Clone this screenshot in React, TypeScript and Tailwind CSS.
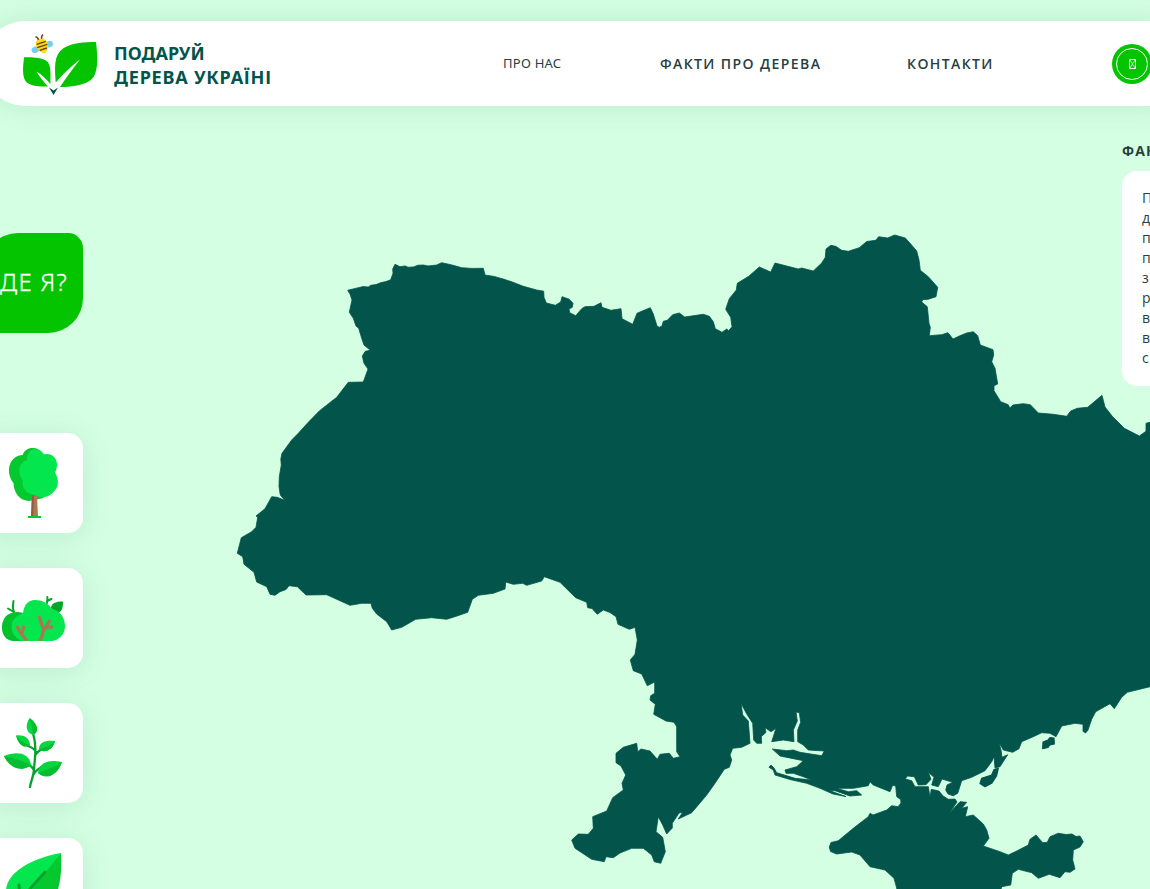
import React from "react";

const MAINLAND =
  "M347.7 290.3 358.3 287.7 363 286.6 368.3 287 370.7 285.3 376 284.6 380.7 282.7 386 281.6 390.7 279.7 393 273.3 392.7 269 395 264.3 400 266.7 405 265.9 408 267.2 413.3 267 418 265.2 423.3 265 428 266 436.7 265 441.7 262.7 452 265 461.7 267.7 472 268.4 483.3 268.3 485 275 494 276.4 503.3 279 513 282.3 523.3 286.3 536.7 290 543.7 291.2 544 297.3 546.3 303 555.3 305.3 560.7 302 562 296.7 569.3 299.3 573 303.3 572.3 307.3 569 309 569.7 312.7 575.7 315.7 581.7 308.7 585 306.7 594 306.3 601 302.7 602 307.3 611 310.3 621 308.7 622 318.7 632.7 324.3 637 313.3 644 310.3 650.3 307.7 653.3 314 657 326 659.3 327.3 662 326 663.3 321.3 667.3 320.3 672.7 314.7 679.3 313 684.7 317 703.3 314.3 709.3 316.3 713.3 321.7 715.3 328.7 722 332.3 726.7 329 728.7 330.7 732 326.7 730.7 317.3 725.7 309.3 729.3 298.7 736.3 290 737.3 283.3 748.7 276.3 759.3 267 770.7 272 775 263 798.3 269 801.7 268 813.3 271 821.7 263 825.3 257.3 826 249 830.7 245.3 835.7 246.3 841.7 250.3 848.3 251.3 859.3 247.7 866.7 241.5 875.7 240.3 878.7 236.7 887.7 238 894.7 235 905.3 238 910.7 244 916.7 251 919 260 920.3 270.3 928.3 276.7 937.7 287.3 936 296.7 928.3 299.3 922.7 299.7 921.7 302 927.3 306.7 929 323.3 930.3 327.3 929.3 335.7 941.7 334.7 948 332.7 953 339 959.3 336 966.7 333 973.3 331.7 977.7 335.7 980.3 345 993 349.7 993.7 355 991.7 361.7 995 368.3 997.7 384 994 385.7 994 390.7 1000.7 401.7 1008.3 404.7 1009.7 408 1013 405 1023.3 403.7 1030.3 404.7 1038.3 413 1053.3 414.3 1066.7 416.3 1070.7 411 1077.3 408.3 1087.7 407.3 1102 395.3 1105 407 1112.3 416.3 1124.3 428.3 1139.3 436 1146 431.3 1146 423.3 1160 420 1160 685 1150 686.7 1127.3 692.3 1121.7 697.3 1114.3 708.7 1110 703.7 1095.7 711.7 1091.7 719.3 1088 730 1085.7 733 1083 731.3 1083 724.3 1075 723.3 1061.7 726 1056 736.7 1050 733.3 1041.7 732.7 1033.3 736.7 1021.7 741.7 1019 748.7 1012.7 752.3 1003.3 750 999 742.7 1001 750 1002 757.3 1007.7 754.7 1000 766.7 995 768 994 756.7 991.7 761.7 985 770.7 971.7 777.3 961.7 780.7 957.7 793.3 953.3 795.8 948 794 945.7 790 947 785 952.7 782.3 942 779 938.3 786.7 931.7 785 934 777.3 928.3 772.3 931 779.3 926 784.7 918.3 785 914.3 776.7 907.3 776 905.3 779 911.7 780.7 915 786.7 928.3 786.7 930 797.3 931.3 789.3 939 791 943 796 948.3 799.3 955 799 957 802 949.3 813.3 960 801.7 966.700 802.3 961.7 808.3 967.7 806.7 965.3 816.7 973.3 815 983.3 824 986.7 830 989 838.3 983.3 846 1000 851.7 1008.3 855 1016.7 851 1028.3 845 1030 839.3 1036 835 1042.7 842.7 1047.3 842.3 1050 836.7 1058.3 833.3 1066 834.5 1072 834 1076 836.5 1080 836 1083.3 841.7 1080 847 1073.3 850 1072.7 860 1075 869 1070 872.3 1065 871.7 1060 877.7 1049.3 874.3 1038.3 878.3 1031.7 872.7 1018.3 869.3 1012.3 873.3 1010.7 885 1001.7 886.7 998 900 898 900 896.7 888 894 878.3 885 870 870 866.7 860 855 851.7 852 836.7 854 830.5 851.5 829.3 847 831 842.5 838.3 840.7 853.3 828.3 868.3 816.7 870 813.3 873 815 886.7 810 891.7 805.7 898 806.7 901 803 900.7 799.5 896.7 796.7 895.7 786 892.7 785.3 890 791.7 873.3 785 870 781.7 868.3 785.7 853.3 788.3 836.7 788.3 848.3 791.7 856.7 790.7 861.7 795 850 796 835 790.7 830 790.8 846 796.6 833 794 820 788.3 806.7 783.3 790 779.5 775 775 773.3 770 769 767.3 771 765 774 768 776.7 772.7 795 778.3 811.7 780 803.3 776.7 793.3 773.3 786 773.3 785 770 796.7 766.7 803.3 760.7 780 756 772.3 749 786.7 750.7 793.3 750 800 752.3 821.7 755.7 824.3 751 808.3 750 803.3 745 797.7 741.7 797.7 730 800.7 722.3 799.3 712.7 796 712 797.3 721 793.3 730 794 741.7 783.3 740 771.7 741.7 776 728.3 771 731.7 765 727.7 766 732.3 761.3 736.7 761.7 743.3 756.7 743.3 753.7 740 752.7 723.3 746.7 714 741 703.3 742.7 715 748.3 721 750 743.3 741.7 747.3 732.7 748.3 730 755 731.7 760 729.3 767.3 724.3 769.3 715 783.3 706.7 795 691.7 812.7 678.3 819 682.7 812.3 679 813 672.3 823.3 672.3 828 666.7 834 662.7 825 658.3 816.7 656 831.7 662.7 837.3 665.3 851.7 660.7 863.3 654.3 861.7 651.7 855 643.3 848.3 631.7 848.3 620 853 613.3 857.7 606 856.7 604.3 861.7 591.7 859.3 575 848.3 571.7 840 578.3 834 588.3 834.3 593.3 828.3 592.7 816.7 606.7 811 612.7 797.7 623.3 790 622 783.3 625.7 775 621 766 616 762.7 616 753.3 623.3 747.3 636.7 743.3 637.7 751.7 641 749 650 751 657.3 759.3 660 754.3 669.3 753.3 673.3 758.3 680 756.7 676.7 751.7 676.7 726.7 674 722.3 666 721 653.7 714.3 655.3 704.3 650 700 650.7 695.7 654.7 693.3 654.7 682 647.3 685.7 641.7 674 633.3 670.7 630.3 660 635 654.3 637.3 640 635 627.3 629.3 629.3 618 624.3 616 616.7 610 612.5 603.3 610 597.3 614.3 592 608.5 587.7 607.7 586.7 602.3 575.7 597.7 560 582.3 544.3 576.7 541.7 581 526.7 585.3 522.7 583.3 513.3 584.3 505.7 582 505 589 493.3 593.3 478.3 595.3 472.3 599.3 467.7 612.3 457 616 446.7 619.3 431.7 617.7 415.7 619.3 401.7 627.3 391.7 630 386.7 621.7 376.7 614 372.3 608.3 371 603.3 361.7 603.3 350 605.3 338.3 600 326.7 594.7 306 595 297.3 586.7 289 585.7 286 589.5 280 591.7 275 595.3 270 594.3 266.7 586.7 256.7 582 254 572.3 244 564.3 242.7 556.7 237.3 553.3 241.3 537.7 251.7 531.7 256 527.3 257.7 517.3 256 516 265 508.7 271.7 496.7 277.3 497.3 284.7 500.3 280.3 495 279 486.7 279.3 476.7 281.3 465 280.8 459 282 453.3 291.7 440 298.3 433.3 309 421.5 319.3 411 336.7 397.3 348.3 382.3 363.3 382 368 369 364 363.3 362.3 356 365.3 351.3 370.3 350.3 364 345 361.7 338.3 358.7 328.3 356 326 353.3 318.3 349.3 312.3 352 300 350 294Z";

const ISLANDS = [
  "M1043 742 1048 740 1050 737.7 1054 738 1054.3 744 1050 745 1048 747.5 1042.7 748.7Z",
  "M980 783.5 981.7 778.3 991.7 775 994 769.5 998.3 768.3 996.5 776 991.7 783.3 985 786.7Z",
];

function UkraineMap() {
  return (
    <svg
      className="pointer-events-none absolute inset-0 h-[889px] w-[1150px]"
      viewBox="0 0 1150 889"
      fill="#03544b"
      stroke="#03544b"
      strokeLinejoin="round"
      aria-hidden="true"
    >
      <path d={MAINLAND} strokeWidth=".8" />
      {ISLANDS.map((d) => (
        <path key={d} d={d} strokeWidth="1.2" />
      ))}
    </svg>
  );
}

function Logo() {
  return (
    <svg className="h-[75px] w-[100px] shrink-0" viewBox="10 25 100 75" aria-hidden="true">
      <g fill="#04c400">
        <path d="M24.2 56.300c8-.5 17 .2 21.800 3.200 5.500 3.500 4.600 13 4.400 23.500-3.800-4.600-8.500-9.500-14-12.500 3 5 7 10.200 11.500 15-8.600.4-18.500-.6-22.200-5.200-3.500-4.500-3-15-1.500-24z" />
        <path d="M96 41c-12 0-25.500 1-33 6.500-9.300 7-8.300 18-7.300 34C62 74 71.500 65 80 58.500 73.500 67 66 77 60 86c10 0 24.500-1.300 31.500-7.500C99 71.500 97.500 54 96 41z" />
      </g>
      <path d="m49 86.500 4.500 3 4.500-3-4.500 7.500z" fill="#03544b" />
      <g transform="rotate(-18 42 45)">
        <ellipse cx="34.500" cy="46.500" rx="3.800" ry="3.200" fill="#74cff8" />
        <ellipse cx="49.500" cy="45.500" rx="3.800" ry="3.200" fill="#74cff8" />
        <path d="M36.300 44c0-4.500 2-6.500 5.700-6.500s6 2 6 6.500c0 4-3 8-5.500 9-2.700-1-6.200-5-6.200-9z" fill="#fedb10" />
        <path d="M37.500 41.800h9.500M37 45h10.500M38.500 48.400h7.500" stroke="#644023" strokeWidth="1.400" />
        <path d="M40.500 38c.3-1.800-.2-3-1.800-3.800M44 38c0-1.800 1-3 2.600-3.500" fill="none" stroke="#644023" strokeWidth="1.400" />
      </g>
    </svg>
  );
}

function Header() {
  return (
    <header className="relative -ml-[17px] flex h-[85px] w-[1210px] shrink-0 items-center rounded-[42px] bg-white pl-[27px] shadow-[0_0_30px_rgba(0,100,60,0.12)]">
      <Logo />
      <div className="ml-1 flex w-[389px] flex-col pt-[3px] font-['Noto_Sans',sans-serif] text-[18px] leading-6 font-bold whitespace-nowrap text-[#03544b]">
        <span>ПОДАРУЙ</span>
        <span className="tracking-[0.78px]">ДЕРЕВА УКРАЇНІ</span>
      </div>
      <nav className="flex items-center font-['Open_Sans',sans-serif] text-[14px] whitespace-nowrap text-[#263f3f]">
        <a className="w-[157px] font-['Noto_Sans',sans-serif] text-[13px] tracking-[0.25px]">ПРО НАС</a>
        <a className="w-[247px] font-semibold tracking-[1.4px]">ФАКТИ ПРО ДЕРЕВА</a>
        <a className="w-[205px] font-semibold tracking-[1.4px]">КОНТАКТИ</a>
      </nav>
      <button className="flex size-10 shrink-0 items-center justify-center rounded-full bg-[#04c400] text-white">
        <span className="flex size-8 items-center justify-center rounded-full border border-white">
          <svg className="h-[10px] w-[7px]" viewBox="0 0 7 10" fill="none" stroke="currentColor">
            <path d="M.5.5h6v9h-6z" />
            <path d="m1 1 5 8M6 1 1 9" strokeWidth=".8" />
          </svg>
        </span>
      </button>
    </header>
  );
}

function TreeIcon() {
  return (
    <svg className="size-[70px]" viewBox="-2 448 70 70">
      <path d="M22.500 455c-6 0-10 4-12 8-3 6-1.500 15 3 20 0 9 6 18 16 18l14-3-3-43z" fill="#04c82d" />
      <path d="M22.500 456c1-5.500 6-8.500 11-8 4.500.2 8 3 10 6z" fill="#04c82d" />
      <path d="M27 460c-.5-6 3-10.500 8-11 4 0 7 3 9 5.500 7-2 13 3 13 10 0 4-1 6-2 8 5 8 3 16-2 20-6 6-14 6-19 2-8-1-13-7-11-14-7-9-3-18.500 4-20.500z" fill="#04e64e" />
      <path d="M32 495.500h5l1 21h-7z" fill="#b07551" />
      <path d="M32 495.500h2l-.7 21H31z" fill="#8f5e3f" />
      <path d="M28 516h13v2H28z" fill="#04c82d" />
    </svg>
  );
}

function BushIcon() {
  return (
    <svg className="size-[70px]" viewBox="-2 583 70 70">
      <g fill="none" stroke="#04a62a" strokeWidth="2" strokeLinecap="round">
        <path d="M14 612c-2-4-1-7-.500-11M8 608.500l5 3M47 603c0-2 1-4 .300-6M47 601l4.500-2" />
      </g>
      <path d="M51 608c0-5 6-7 12-6.500 0 7-1 11-7 12z" fill="#04a62a" />
      <path d="M13 641C-1 640-1 619 9 614c4-2 9-3 14-1l12 15-6 13z" fill="#04c02b" />
      <path d="M22 641C10 636 9 623 16 617c3-2.500 5-3 7-4 1-8 5-13 12-13s13 3 17 9c7 1 13 8 13 17 0 8-6 15-14 15z" fill="#04e64e" />
      <path d="M27 641c-4-5-8-9-10-15M22 633l2-7M40 641c2-5 4-8 3-13l-4-12M43 632l7-12M46 627h7" fill="none" stroke="#ad7653" strokeWidth="3.300" />
      <path d="M0 641h66v5H0z" fill="white" />
    </svg>
  );
}

function SproutIcon() {
  return (
    <svg className="size-[70px]" viewBox="-2 718 70 70">
      <path d="M30 787c1-7 4-11 4-18 1-12 3-22-1-36M34 770c-2-4-4-5-7-6M34 774c1-3 4-4 7-7M36 752c-2-4-5-5-8-6M36 754c2-3 5-4 7-6" fill="none" stroke="#04a22d" strokeWidth="2.300" strokeLinecap="round" />
      <g fill="#04d83e">
        <path d="M29.500 718c-5 8-3 15 3.500 17 6-3 6-10-3.500-17z" />
        <path d="M16 735.500c7-1 14 2 14 10-6 3-11 0-14-10z" />
        <path d="M55 741c-9-1-16 1-16 8 5 5 14 1 16-8z" />
        <path d="M4 756c12-5 25-4 27 9-10 8-22 2-27-9z" />
        <path d="M62 762c-14-3-23 1-24 11 8 7 19 3 24-11z" />
      </g>
      <g fill="#04bd30">
        <path d="M29.500 718c2 6 3 12 3.500 17 6-3 6-10-3.500-17z" />
        <path d="M16 735.500c4 6 10 8 14 10-6 3-11 0-14-10z" />
        <path d="M55 741c-4 5-10 6-16 8 5 5 14 1 16-8z" />
        <path d="M4 756c10 2 18 5 27 9-10 8-22 2-27-9z" />
        <path d="M62 762c-8 6-15 7-24 11 8 7 19 3 24-11z" />
      </g>
    </svg>
  );
}

function LeafIcon() {
  return (
    <svg className="size-[70px]" viewBox="-2 853 70 70">
      <path d="M61 853C38 857 8 869 6 890c-2 17 9 28 16 29z" fill="#04e64e" />
      <path d="M61 853c2 31-5 66-39 66l-6-9z" fill="#04c82d" />
      <path d="m4 921 26-32 15-17M20 902l-1-17" stroke="#04a22d" strokeWidth="3" strokeLinecap="round" fill="none" />
    </svg>
  );
}

const ICONS = [TreeIcon, BushIcon, SproutIcon, LeafIcon];

function Sidebar() {
  return (
    <aside className="-ml-[17px] flex w-[100px] shrink-0 flex-col pt-[127px]">
      <button className="flex h-[100px] shrink-0 items-center justify-end rounded-tl-[35px] rounded-tr-[15px] rounded-br-[35px] rounded-bl-[15px] bg-[#04c400] pr-[15px] pb-[2px] font-['Noto_Sans',sans-serif] text-[24px] font-light tracking-[1.3px] whitespace-nowrap text-white [-webkit-text-stroke:0.3px_white]">
        ДЕ Я?
      </button>
      <div className="mt-[100px] flex flex-col gap-[35px]">
        {ICONS.map((Icon, i) => (
          <button
            key={i}
            className="flex size-[100px] shrink-0 items-center justify-center rounded-[15px] bg-white shadow-[0_4px_30px_rgba(0,100,60,0.12)]"
          >
            <Icon />
          </button>
        ))}
      </div>
    </aside>
  );
}

const FACT_LINES = ["П", "д", "п", "п", "з", "р", "в", "в", "с"];

function Facts() {
  return (
    <section className="relative ml-auto w-7 shrink-0 pt-[35px] font-['Open_Sans',sans-serif] text-[#263f3f]">
      <h2 className="w-[100px] text-[14px] leading-5 font-bold tracking-[1.2px]">ФАКТ</h2>
      <div className="mt-[10px] h-[215px] w-[260px] rounded-[15px] bg-white px-5 pt-[17px] text-[14px] leading-5">
        {FACT_LINES.map((line, i) => (
          <p key={i}>{line}</p>
        ))}
      </div>
    </section>
  );
}

export default function App() {
  return (
    <div className="relative flex h-[889px] w-[1150px] flex-col overflow-hidden bg-[#d4ffe3] pt-[21px]">
      <UkraineMap />
      <Header />
      <main className="relative flex min-h-0 flex-1">
        <Sidebar />
        <Facts />
      </main>
    </div>
  );
}
